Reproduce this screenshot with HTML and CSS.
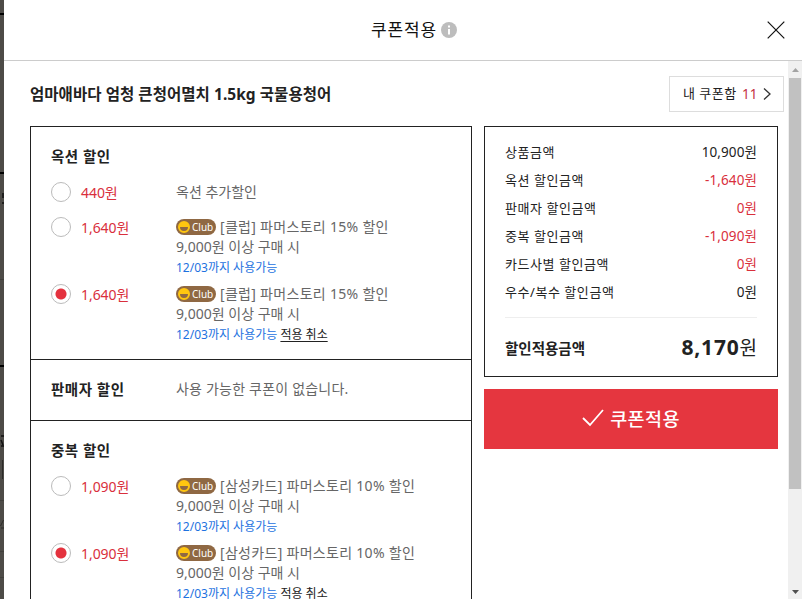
FILE: index.html
```html
<!DOCTYPE html>
<html lang="ko">
<head>
  <meta charset="UTF-8" />
  <meta name="viewport" content="width=device-width, initial-scale=1.0" />
  <title>쿠폰적용</title>
  <link rel="stylesheet" href="styles.css">
</head>
<body>
  <svg class="backdrop" width="4" height="599" viewBox="0 0 4 599">
    <path d="M0 14h4M0 173h4M0 366h4" stroke="#000" stroke-width="2" />
    <path d="M3 193v5M2 203h2M1 436h3M1 440l2 5M1 446h3" stroke="#111" stroke-width="1.5" />
    <path d="M2.5 460v19M3.500 520l-3 6M1 528h3" stroke="#2c2b28" />
    <path d="M0 279.500h4M0 500.500h4M0 551.500h4M0 577.500h4" stroke="#403f3b" />
  </svg>
  <div class="layer">
    <header class="layer-header">
      <h1>쿠폰적용</h1>
      <svg class="info" width="16" height="16" viewBox="0 0 16 16">
        <circle cx="8" cy="8" r="8" fill="#bdbdbd" />
        <path d="M8 3.500v2M8 7v5.500" stroke="#fff" stroke-width="2" />
      </svg>
      <svg class="close" width="18" height="18" viewBox="0 0 18 18">
        <path d="M.7.7l16.600 16.600M17.300.7L.7 17.300" stroke="#111" stroke-width="1.200" />
      </svg>
    </header>

    <div class="layer-body">
      <main class="content">
        <div class="title-row">
          <h2>엄마애바다 엄청 큰청어멸치 1.5kg 국물용청어</h2>
          <a class="my-coupon">
            <span class="my-label">내 쿠폰함</span>
            <span class="count">11</span>
            <svg width="8" height="12" viewBox="0 0 8 12"><path d="M1 .6L7 6 1 11.400" fill="none" stroke="#333" stroke-width="1.300" /></svg>
          </a>
        </div>

        <div class="columns">
          <div class="coupon-box">
            <section class="group">
              <h3>옥션 할인</h3>
              <div class="coupon">
                <span class="radio"></span>
                <span class="price">440원</span>
                <div class="desc"><p>옥션 추가할인</p></div>
              </div>
              <div class="coupon">
                <span class="radio"></span>
                <span class="price">1,640원</span>
                <div class="desc">
                  <p class="name"><span class="club"><i class="smile"></i>Club</span>[클럽] 파머스토리 15% 할인</p>
                  <p>9,000원 이상 구매 시</p>
                  <p class="date">12/03까지 사용가능</p>
                </div>
              </div>
              <div class="coupon">
                <span class="radio checked"></span>
                <span class="price">1,640원</span>
                <div class="desc">
                  <p class="name"><span class="club"><i class="smile"></i>Club</span>[클럽] 파머스토리 15% 할인</p>
                  <p>9,000원 이상 구매 시</p>
                  <p class="date">12/03까지 사용가능 <a class="cancel">적용 취소</a></p>
                </div>
              </div>
            </section>

            <section class="group seller">
              <h3>판매자 할인</h3>
              <p class="empty">사용 가능한 쿠폰이 없습니다.</p>
            </section>

            <section class="group">
              <h3>중복 할인</h3>
              <div class="coupon">
                <span class="radio"></span>
                <span class="price">1,090원</span>
                <div class="desc">
                  <p class="name"><span class="club"><i class="smile"></i>Club</span>[삼성카드] 파머스토리 10% 할인</p>
                  <p>9,000원 이상 구매 시</p>
                  <p class="date">12/03까지 사용가능</p>
                </div>
              </div>
              <div class="coupon">
                <span class="radio checked"></span>
                <span class="price">1,090원</span>
                <div class="desc">
                  <p class="name"><span class="club"><i class="smile"></i>Club</span>[삼성카드] 파머스토리 10% 할인</p>
                  <p>9,000원 이상 구매 시</p>
                  <p class="date">12/03까지 사용가능 <a class="cancel">적용 취소</a></p>
                </div>
              </div>
            </section>
          </div>

          <aside class="side">
            <div class="summary">
              <div class="row"><span>상품금액</span><span class="amount">10,900원</span></div>
              <div class="row"><span>옥션 할인금액</span><span class="amount minus">-1,640원</span></div>
              <div class="row"><span>판매자 할인금액</span><span class="amount minus">0원</span></div>
              <div class="row"><span>중복 할인금액</span><span class="amount minus">-1,090원</span></div>
              <div class="row"><span>카드사별 할인금액</span><span class="amount minus">0원</span></div>
              <div class="row"><span>우수/복수 할인금액</span><span class="amount">0원</span></div>
              <div class="total"><strong>할인적용금액</strong><span class="sum"><b>8,170</b>원</span></div>
            </div>
            <button class="apply">
              <svg width="22" height="18" viewBox="0 0 22 18"><path d="M1 9l7 7L21 1" fill="none" stroke="#fff" stroke-width="1.800" /></svg>
              <span>쿠폰적용</span>
            </button>
          </aside>
        </div>
      </main>

      <div class="scrollbar">
        <svg width="14" height="17" viewBox="0 0 14 17"><path d="M4 11l3.500-4 3.500 4z" fill="#a3a3a3" /></svg>
        <div class="thumb"></div>
        <svg class="down" width="14" height="17" viewBox="0 0 14 17"><path d="M4 8h7l-3.500 4z" fill="#505050" /></svg>
      </div>
    </div>
  </div>
</body>
</html>
```
FILE: styles.css
```css
* { box-sizing: border-box; }
body { display: flex; height: 599px; margin: 0; overflow: hidden; background: #4d4b47; color: #222; font-family: "Noto Sans", "Noto Sans CJK KR", sans-serif; font-size: 13px; }
h1, h2, h3, p { margin: 0; }
svg { display: block; flex: none; }

.layer { width: 798px; height: 599px; background: #fff; overflow: hidden; }
.layer-header { display: flex; align-items: center; height: 61px; padding: 0 17px 0 367px; border-bottom: 1px solid #ccc; }
.layer-header h1 { font-size: 17px; font-weight: 400; letter-spacing: 0.9px; line-height: 24px; width: 66px; padding-bottom: 1px; white-space: nowrap; color: #111; }
.info { margin-left: 4px; }
.close { margin-left: auto; }

.layer-body { display: flex; height: 538px; }
.content { width: 784px; padding: 15px 10px 0 26px; }
.title-row { display: flex; justify-content: space-between; height: 50px; margin-right: -6px; }
.title-row h2 { font-size: 15.5px; line-height: 36px; font-weight: 700; letter-spacing: 0.05px; white-space: nowrap; }
.my-coupon { display: flex; align-items: center; width: 115px; height: 36px; padding-left: 13px; border: 1px solid #ddd; line-height: 18px; white-space: nowrap; }
.my-label { width: 59px; padding-bottom: 2px; letter-spacing: 0.5px; }
.count { width: 21px; padding-bottom: 1px; font-size: 13.5px; color: #c4313f; }

.columns { display: flex; gap: 12px; align-items: flex-start; }
.coupon-box { width: 442px; border: 1px solid #222; }
.group { padding: 19px 20px 15px; }
.group + .group { border-top: 1px solid #222; }
.group h3 { font-size: 14.5px; line-height: 20px; margin-bottom: 16px; letter-spacing: 0.5px; }
.coupon { display: flex; min-height: 28px; margin-bottom: 7px; }
.coupon:last-child { margin-bottom: 0; }
.radio { width: 20px; height: 20px; border: 1px solid #bbb; border-radius: 50%; flex: none; }
.checked { background: radial-gradient(circle, #e4323e 5px, #fff 6px); }
.price { width: 95px; margin-left: 10px; padding-top: 1px; font-size: 14px; line-height: 20px; color: #d92f3c; letter-spacing: -0.05px; }
.desc, .empty { font-size: 14px; line-height: 20px; color: #666; white-space: nowrap; }
.name { letter-spacing: 0.3px; }
.empty { letter-spacing: 0.2px; }
.club { display: inline-flex; align-items: center; gap: 2px; width: 40px; height: 16px; margin: -2px 4px 0 0; padding-left: 2px; border-radius: 8px; background: #8f6843; color: #fff; font-size: 10px; letter-spacing: 0; line-height: 16px; vertical-align: middle; }
.smile { width: 12px; height: 12px; border: 2px solid #ffc610; border-radius: 50%; background: linear-gradient(#ffc610 50%, #8f6843 50%); }
.desc .date { height: 20px; padding-top: 1px; font-size: 12px; color: #1d72e0; }
.cancel { color: #222; text-decoration: underline; text-underline-offset: 2px; }
.seller { display: flex; height: 61px; padding-bottom: 0; }
.seller h3 { width: 125px; }

.side { width: 294px; }
.summary { height: 251px; padding: 11px 20px 0; border: 1px solid #222; }
.row { display: flex; justify-content: space-between; height: 28px; line-height: 28px; letter-spacing: 0.55px; }
.amount { font-size: 13.5px; letter-spacing: 0.1px; }
.minus { color: #d92f3c; }
.total { display: flex; justify-content: space-between; align-items: center; height: 59px; margin-top: 11px; border-top: 1px solid #eee; }
.total strong { font-size: 14.5px; letter-spacing: 0; }
.sum { padding-top: 1px; font-size: 19px; line-height: 26px; }
.sum b { font-size: 21px; letter-spacing: 0.8px; }
.apply { display: flex; justify-content: center; align-items: center; gap: 6px; width: 294px; height: 60px; margin-top: 12px; padding: 0; border: 0; background: #e5363f; color: #fff; font-family: inherit; font-size: 18.5px; font-weight: 500; letter-spacing: 0.4px; }
.apply svg { margin-bottom: 2px; }
.apply span { padding-bottom: 2px; }

.scrollbar { display: flex; flex-direction: column; width: 14px; height: 538px; background: #f0f0f0; }
.thumb { width: 12px; height: 411px; margin-left: 1px; background: #c1c1c1; }
.down { margin-top: auto; }
```
